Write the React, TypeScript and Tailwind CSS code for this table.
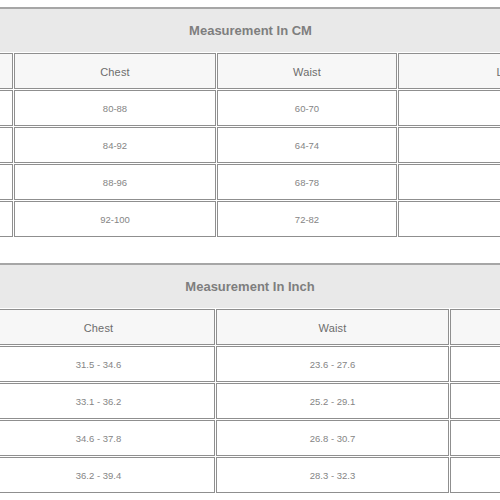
const cmRows = [
  ['', '80-88', '60-70', ''],
  ['', '84-92', '64-74', ''],
  ['', '88-96', '68-78', ''],
  ['', '92-100', '72-82', ''],
]

const inchRows = [
  ['', '31.5 - 34.6', '23.6 - 27.6', ''],
  ['', '33.1 - 36.2', '25.2 - 29.1', ''],
  ['', '34.6 - 37.8', '26.8 - 30.7', ''],
  ['', '36.2 - 39.4', '28.3 - 32.3', ''],
]

function SizeTable({
  title,
  headers,
  rows,
  cols,
  shift,
}: {
  title: string
  headers: string[]
  rows: string[][]
  cols: string
  shift: string
}) {
  return (
    <div className="w-[500px] overflow-hidden">
      <div className={`grid w-max gap-[1px] p-[1px] bg-white ${cols} ${shift}`}>
        {/* Title row */}
        <div className="col-span-4 h-[45px] border-t-2 border-[#a6a6a6] bg-[#e9e9e9] flex items-center justify-center text-[13px] font-bold text-[#7e7e7e]">
          {title}
        </div>

        {headers.map((h, i) => (
          <div
            key={'h' + i}
            className="h-[36px] pt-[3px] border border-[#8f8f8f] bg-[#f7f7f7] flex items-center justify-center text-[11px] tracking-[0.2px] text-[#6c6c6c]"
          >
            {h}
          </div>
        ))}

        {rows.map((row, r) =>
          row.map((v, i) => (
            <div
              key={r + '-' + i}
              className="h-[36px] pt-[3px] border border-[#8f8f8f] bg-white flex items-center justify-center text-[9.5px] text-[#858585]"
            >
              {v}
            </div>
          ))
        )}
      </div>
    </div>
  )
}

export default function App() {
  return (
    <div className="w-[500px] h-[500px] overflow-hidden bg-white font-['Liberation_Sans',Arial,sans-serif]">
      <div className="pt-[6px]">
        <SizeTable
          title="Measurement In CM"
          headers={['', 'Chest', 'Waist', 'Length']}
          rows={cmRows}
          cols="grid-cols-[142px_202px_180px_232px]"
          shift="ml-[-130px]"
        />
      </div>
      <div className="mt-[24px]">
        <SizeTable
          title="Measurement In Inch"
          headers={['', 'Chest', 'Waist', '']}
          rows={inchRows}
          cols="grid-cols-[164px_233px_233px_233px]"
          shift="ml-[-184px]"
        />
      </div>
    </div>
  )
}
